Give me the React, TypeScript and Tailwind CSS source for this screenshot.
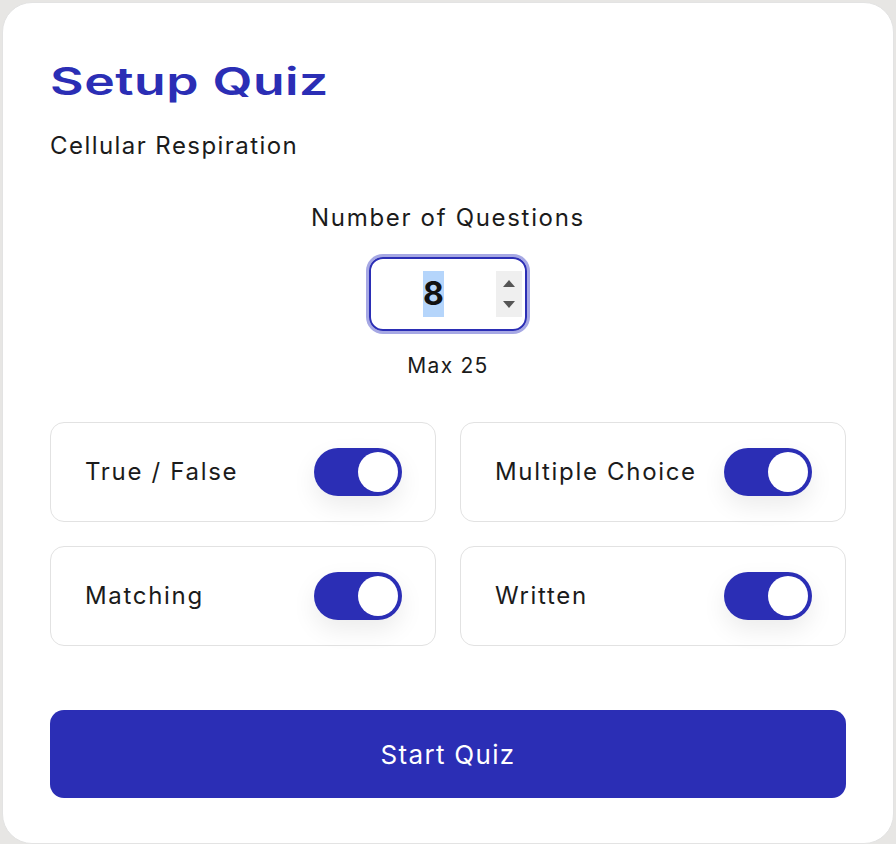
import { useState } from 'react'

const types = ['True / False', 'Multiple Choice', 'Matching', 'Written']

function Toggle({ on, onClick }: { on: boolean; onClick: () => void }) {
  return (
    <button
      onClick={onClick}
      className={`relative w-[88px] h-[48px] rounded-full shadow-[0_10px_24px_rgba(0,0,0,0.08)] ${on ? 'bg-[#2b2eb5]' : 'bg-gray-300'}`}
    >
      <span
        className={`absolute top-[4px] w-[40px] h-[40px] rounded-full bg-white ${on ? 'left-[44px]' : 'left-[4px]'}`}
      />
    </button>
  )
}

export default function App() {
  const [enabled, setEnabled] = useState<Record<string, boolean>>({
    'True / False': true,
    'Multiple Choice': true,
    Matching: true,
    Written: true,
  })

  return (
    <div className="w-[896px] h-[844px] bg-[#e7e6e4] p-[2px] overflow-hidden" style={{ fontFamily: 'Inter, "Noto Sans", sans-serif' }}>
      <div className="h-[842px] bg-white border border-[#e3e3e3] rounded-[30px] px-[47px] pt-[55px]">
        {/* Header */}
        <h1 className="text-[38px] leading-[46px] font-semibold text-[#2b2eb5] tracking-[0.01em] origin-left scale-x-[1.36]">Setup Quiz</h1>
        <p className="mt-[26px] text-[24px] leading-[32px] tracking-[0.06em] text-[#1b1b1b]">Cellular Respiration</p>

        {/* Question count */}
        <div className="mt-[40px] flex flex-col items-center">
          <p className="text-[24px] leading-[32px] tracking-[0.07em] text-[#1b1b1b]">Number of Questions</p>
          <div className="mt-[23px] w-[158px] h-[74px] rounded-[14px] border-2 border-[#2b2eb5] ring-[3px] ring-[#a6a8e4] flex items-center pr-[3px]">
            <span className="flex-1 flex justify-center">
              <span className="bg-[#b5d5fb] text-[32px] leading-[46px] font-bold text-[#111]">8</span>
            </span>
            <span className="w-[26px] h-[46px] bg-[#efefef] flex flex-col items-center justify-center gap-[14px]">
              <svg width="12" height="7" viewBox="0 0 12 7"><path d="M6 0L12 7H0z" fill="#555" /></svg>
              <svg width="12" height="7" viewBox="0 0 12 7"><path d="M0 0h12L6 7z" fill="#555" /></svg>
            </span>
          </div>
          <p className="mt-[21px] text-[21px] leading-[28px] tracking-[0.06em] text-[#1b1b1b]">Max 25</p>
        </div>

        {/* Question types */}
        <div className="mt-[42px] grid grid-cols-2 gap-x-[24px] gap-y-[24px]">
          {types.map((t) => (
            <div key={t} className="h-[100px] border-[1.5px] border-[#e2e2e2] rounded-[14px] flex items-center justify-between pl-[34px] pr-[33px]">
              <span className="text-[24px] tracking-[0.07em] text-[#1b1b1b]">{t}</span>
              <Toggle on={enabled[t]} onClick={() => setEnabled({ ...enabled, [t]: !enabled[t] })} />
            </div>
          ))}
        </div>

        <button className="mt-[64px] w-full h-[88px] rounded-[14px] bg-[#2b2eb5] text-white text-[26px] tracking-[0.05em]">Start Quiz</button>
      </div>
    </div>
  )
}
